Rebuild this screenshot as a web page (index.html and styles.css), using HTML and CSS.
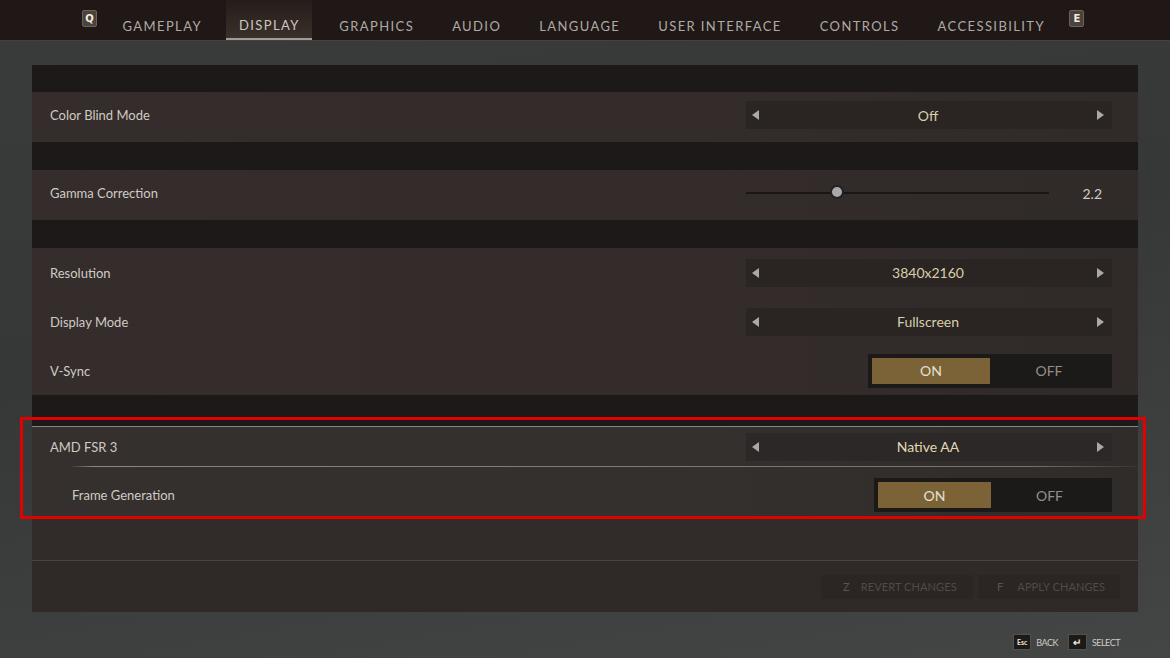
FILE: index.html
```html
<!DOCTYPE html>
<html lang="en">
<head>
  <meta charset="UTF-8" />
  <meta name="viewport" content="width=device-width, initial-scale=1" />
  <title>Settings - Display</title>
  <link rel="stylesheet" href="styles.css">
</head>

<body>
  <div class="header">
    <span class="keycap">Q</span>
    <div class="tab">GAMEPLAY</div>
    <div class="tab active">DISPLAY</div>
    <div class="tab">GRAPHICS</div>
    <div class="tab">AUDIO</div>
    <div class="tab">LANGUAGE</div>
    <div class="tab">USER INTERFACE</div>
    <div class="tab">CONTROLS</div>
    <div class="tab">ACCESSIBILITY</div>
    <span class="keycap">E</span>
  </div>

  <div class="panel">
    <div class="band"></div>

    <div class="row tall">
      <div class="label">Color Blind Mode</div>
      <div class="selector">
        <span class="arrow left"></span>
        <span class="value">Off</span>
        <span class="arrow right"></span>
      </div>
    </div>

    <div class="band"></div>

    <div class="row tall">
      <div class="label">Gamma Correction</div>
      <div class="slider">
        <div class="track"><span class="knob"></span></div>
        <span class="slider-value">2.2</span>
      </div>
    </div>

    <div class="band"></div>

    <div class="row">
      <div class="label">Resolution</div>
      <div class="selector">
        <span class="arrow left"></span>
        <span class="value">3840x2160</span>
        <span class="arrow right"></span>
      </div>
    </div>
    <div class="row">
      <div class="label">Display Mode</div>
      <div class="selector">
        <span class="arrow left"></span>
        <span class="value">Fullscreen</span>
        <span class="arrow right"></span>
      </div>
    </div>
    <div class="row">
      <div class="label">V-Sync</div>
      <div class="toggle">
        <span class="opt on">ON</span>
        <span class="opt">OFF</span>
      </div>
    </div>

    <div class="band wide"></div>

    <!-- highlighted group -->
    <div class="group">
      <div class="highlight"></div>
      <div class="row fsr">
        <div class="label">AMD FSR 3</div>
        <div class="selector">
          <span class="arrow left"></span>
          <span class="value bright">Native AA</span>
          <span class="arrow right"></span>
        </div>
      </div>
      <div class="sep"></div>
      <div class="row sub">
        <div class="label">Frame Generation</div>
        <div class="toggle">
          <span class="opt on">ON</span>
          <span class="opt">OFF</span>
        </div>
      </div>
    </div>

    <div class="spacer"></div>

    <div class="actions">
      <div class="action revert"><span class="akey">Z</span>REVERT CHANGES</div>
      <div class="action apply"><span class="akey">F</span>APPLY CHANGES</div>
    </div>
  </div>

  <div class="hints">
    <div class="hint"><span class="hkey">Esc</span>BACK</div>
    <div class="hint"><span class="hkey enter">&#x21B5;</span>SELECT</div>
  </div>
</body>
</html>
```

FILE: styles.css
```css
body {
  margin: 0;
  width: 1170px;
  height: 658px;
  overflow: hidden;
  font-family: 'Lato', 'Liberation Sans', sans-serif;
  color: #d3cdc8;
  background: linear-gradient(170deg, #3a3c3c 0%, #363737 45%, #444545 100%);
}

/* top tabs */
.header {
  height: 40px;
  background: #1f1816;
  border-bottom: 1px solid #4b4039;
  display: flex;
  align-items: center;
  padding-left: 82px;
}
.keycap {
  display: inline-flex;
  align-items: center;
  justify-content: center;
  width: 13px;
  height: 15px;
  margin-top: -4px;
  background: #4a433c;
  border: 1px solid #6a6158;
  border-radius: 2px;
  color: #f2ece0;
  font-size: 10px;
  font-weight: 700;
  font-family: 'DejaVu Sans', sans-serif;
}
.keycap:first-child {
  margin-right: 6px;
}
.keycap:last-child {
  margin-left: 6px;
}
.tab {
  height: 40px;
  display: flex;
  align-items: center;
  padding: 11px 18.5px 0 19.5px;
  font-size: 13px;
  letter-spacing: 1.4px;
  color: #b0aaa5;
  box-sizing: border-box;
}
.tab.active {
  background: linear-gradient(180deg, #251d1a 0%, #3a302b 100%);
  color: #cdc7c1;
  border-bottom: 2px solid #a49d96;
  padding: 11px 12px 0 13px;
  margin: 0 8px 0 5.5px;
}

/* main panel */
.panel {
  margin: 24px 0 0 32px;
  width: 1106px;
  background: #302a28;
}
.band {
  height: 27px;
  background: #1c1918;
}
.band + .row.tall + .band {
  height: 28px;
}
.band.wide {
  height: 29px;
}
.row {
  height: 49px;
  display: flex;
  align-items: center;
  justify-content: space-between;
  padding: 0 26px 0 18px;
  box-sizing: border-box;
  background: linear-gradient(90deg, #342d2b 0%, #332c2a 60%, #302a28 100%);
}
.row.tall {
  height: 50px;
  padding-bottom: 4px;
}
.label {
  font-size: 13px;
  color: #d0cac5;
}

.selector {
  width: 366px;
  height: 28px;
  background: #2a2423;
  display: flex;
  align-items: center;
  justify-content: space-between;
  padding: 0 8px 0 6px;
  box-sizing: border-box;
}
.arrow {
  width: 0;
  height: 0;
  border-top: 5px solid transparent;
  border-bottom: 5px solid transparent;
}
.arrow.left {
  border-right: 7px solid #a9a9a9;
}
.arrow.right {
  border-left: 7px solid #a9a9a9;
}
.value {
  font-size: 14px;
  color: #d7cfa9;
}
.value.bright {
  color: #e2d9b4;
}

.slider {
  width: 366px;
  display: flex;
  align-items: center;
  justify-content: space-between;
  padding-right: 10px;
  box-sizing: border-box;
}
.track {
  position: relative;
  width: 303px;
  height: 2px;
  background: #1a1616;
}
.knob {
  position: absolute;
  left: 84px;
  top: -7px;
  width: 10px;
  height: 10px;
  border-radius: 50%;
  background: #a9a9a9;
  border: 2px solid #222;
}
.slider-value {
  font-size: 14px;
  color: #d0cac5;
}

.toggle {
  width: 244px;
  height: 34px;
  background: #1c1a19;
  display: flex;
  align-items: center;
  padding: 4px;
  box-sizing: border-box;
}
.opt {
  width: 118px;
  height: 100%;
  display: flex;
  align-items: center;
  justify-content: center;
  font-size: 14px;
  color: #938e89;
}
.opt.on {
  background: #7b6337;
  color: #e6e0d2;
}

/* FSR group with red outline */
.group {
  position: relative;
  padding-top: 2px;
  background: #1c1918;
}
.group .row {
  background: linear-gradient(90deg, #35302e 0%, #33302e 60%, #302c2a 100%);
}
.row.fsr {
  height: 40px;
  border-top: 1px solid #8a8580;
}
.row.fsr .selector {
  background: #2c2827;
}
.sep {
  height: 1px;
  background: linear-gradient(90deg, #35302e 0, #35302e 38px, #8a857f 60px, #77716c 1000px, #3a3432 1106px);
}
.row.sub {
  height: 52px;
  padding-left: 40px;
  padding-top: 4px;
}
.row.sub .toggle {
  width: 238px;
}
.row.sub .opt.on {
  width: 114px;
}
.highlight {
  position: absolute;
  left: -12px;
  top: -7px;
  width: 1126px;
  height: 102px;
  border: 3px solid #e30000;
  box-sizing: border-box;
  pointer-events: none;
}

.spacer {
  height: 41px;
  background: #312b29;
  border-bottom: 1px solid #4a4240;
}
.actions {
  height: 51px;
  display: flex;
  align-items: center;
  justify-content: flex-end;
  gap: 5px;
  padding-right: 18px;
  background: #2f2927;
}
.action {
  height: 24px;
  display: flex;
  align-items: center;
  background: #2b2524;
  font-size: 11px;
  color: #514a47;
  letter-spacing: 0.1px;
  box-sizing: border-box;
}
.action.revert {
  width: 152px;
  padding-left: 22px;
}
.action.apply {
  width: 142px;
  padding-left: 19px;
}
.akey {
  margin-right: 11px;
  color: #5a5350;
}
.action.apply .akey {
  margin-right: 14px;
}

/* footer hints */
.hints {
  display: flex;
  justify-content: flex-end;
  gap: 10px;
  padding: 22px 50px 0 0;
}
.hint {
  display: flex;
  align-items: center;
  font-size: 9px;
  letter-spacing: -0.5px;
  color: #cfcac5;
}
.hkey {
  display: inline-flex;
  align-items: center;
  justify-content: center;
  min-width: 14px;
  height: 14px;
  padding: 0 1px;
  margin-right: 5px;
  background: #1c1a18;
  border: 1px solid #56504a;
  font-size: 7px;
  font-weight: 700;
  letter-spacing: 0;
  color: #ece6d8;
}
.hkey.enter {
  min-width: 15px;
  font-size: 10px;
}
```
